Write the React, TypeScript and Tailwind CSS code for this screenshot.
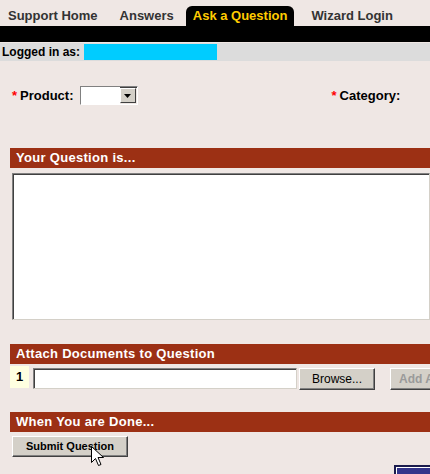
const font = { fontFamily: '"Liberation Sans", Arial, sans-serif' };

function Tab({ label, active, className }: { label: string; active?: boolean; className?: string }) {
  if (active) {
    return (
      <div className={`flex h-5 items-center rounded-t-md bg-black px-[7px] text-[13px] font-bold text-[#ffcc00] ${className ?? ""}`}>
        {label}
      </div>
    );
  }
  return (
    <div className={`flex h-5 items-center text-[13px] font-bold text-[#333333] ${className ?? ""}`}>{label}</div>
  );
}

function SectionBar({ title }: { title: string }) {
  return (
    <div className="flex h-5 items-center bg-[#9c3014] pl-1.5 text-[13px] font-bold tracking-[0.3px] text-white">
      {title}
    </div>
  );
}

function WinButton({ children, disabled, className }: { children: React.ReactNode; disabled?: boolean; className?: string }) {
  return (
    <div
      className={`flex shrink-0 items-center justify-center whitespace-nowrap border border-white border-r-[#404040] border-b-[#404040] bg-[#d4d0c8] shadow-[inset_-1px_-1px_0_#808080] ${className ?? ""} ${
        disabled ? "font-bold text-[#9a9a9a]" : "text-black"
      }`}
    >
      {children}
    </div>
  );
}

export default function App() {
  return (
    <div className="relative h-[474px] w-[430px] overflow-hidden bg-[#efe7e4]" style={font}>
      <nav className="flex h-[26px] items-end">
        <Tab label="Support Home" className="ml-2" />
        <Tab label="Answers" className="ml-[22px]" />
        <Tab label="Ask a Question" active className="ml-[12px]" />
        <Tab label="Wizard Login" className="ml-[17px]" />
      </nav>
      <div className="h-4 bg-black" />
      <div className="mt-px flex h-[18px] items-center bg-[#dcdcdc] pl-0.5">
        <span className="text-[12px] font-bold text-black">Logged in as:</span>
        <span className="ml-[4px] h-4 w-[133px] bg-[#00ccff]" />
      </div>

      <div className="mt-[25px] flex h-[19px] items-center text-[13px] font-bold text-black">
        <span className="ml-3 text-[#ff0000]">*</span>
        <span className="ml-[3px]">Product:</span>
        <div className="ml-1.5 flex h-[19px] w-[58px] border border-[#808080] border-b-white border-r-white shadow-[inset_1px_1px_0_#404040]">
          <div className="flex-1 bg-white" />
          <div className="mb-px mr-px mt-px flex w-[16px] items-center justify-center border border-white border-b-[#404040] border-r-[#404040] bg-[#d4d0c8]">
            <svg width="7" height="4" viewBox="0 0 7 4">
              <path d="M0 0h7L3.5 4z" fill="#000" />
            </svg>
          </div>
        </div>
        <span className="ml-[194px] text-[#ff0000]">*</span>
        <span className="ml-[3px]">Category:</span>
      </div>

      <div className="mt-[43px] pl-[10px]">
        <SectionBar title="Your Question is..." />
        <div className="ml-0.5 mt-[5px] h-[147px] border border-[#808080] border-b-[#d4d0c8] border-r-[#d4d0c8] bg-white shadow-[inset_1px_1px_0_#404040]" />

        <div className="mt-6">
          <SectionBar title="Attach Documents to Question" />
        </div>
        <div className="mt-0.5 flex items-start">
          <div className="flex h-[22px] w-[19px] shrink-0 items-center justify-center bg-[#ffffe0] text-[13px] font-bold text-black">1</div>
          <div className="ml-1 mt-0.5 h-[21px] w-[264px] shrink-0 border border-[#808080] border-b-[#d4d0c8] border-r-[#d4d0c8] bg-white shadow-[inset_1px_1px_0_#404040]" />
          <WinButton className="ml-0.5 mt-0.5 h-[22px] w-[76px] text-[12px]">Browse...</WinButton>
          <WinButton disabled className="ml-[15px] mt-0.5 h-[22px] w-[110px] justify-start pl-2 text-[12px]">
            Add Attachment
          </WinButton>
        </div>

        <div className="mt-[22px]">
          <SectionBar title="When You are Done..." />
        </div>
        <WinButton className="ml-0.5 mt-1 h-[21px] w-[116px] text-[11px] font-bold">Submit Question</WinButton>
        <div className="ml-[384px] mt-2 h-[12px] w-[50px] border-2 border-[#1b1b4d] bg-white p-px">
          <div className="h-full w-full bg-[#34348a]" />
        </div>
      </div>

      <svg className="absolute left-[91px] top-[446px]" width="13" height="21" viewBox="0 0 13 21">
        <path d="M0.5 0.5v16l4-4 3 7 2.5-1-3-7h5.5z" fill="#fff" stroke="#000" strokeWidth="1" />
      </svg>
    </div>
  );
}
